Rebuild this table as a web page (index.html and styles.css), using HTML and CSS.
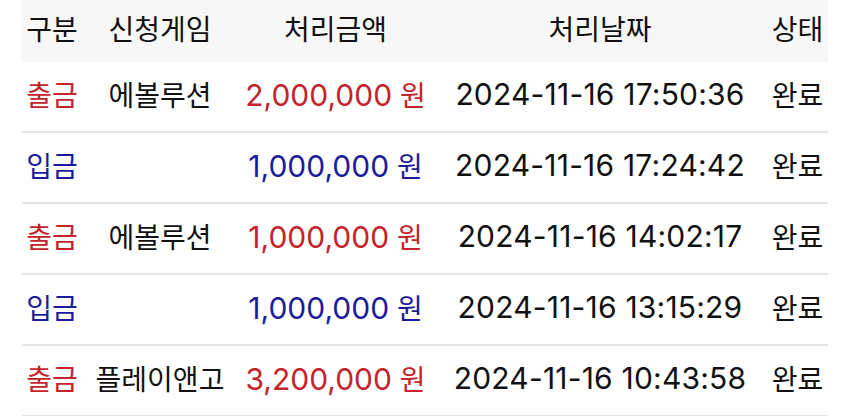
FILE: index.html
```html
<!DOCTYPE html>
<html lang="ko">
<head>
    <meta charset="UTF-8">
    <meta name="viewport" content="width=device-width, initial-scale=1.0">
    <title>처리내역</title>
    <link rel="stylesheet" href="styles.css">
</head>
<body>
    <table class="history">
        <colgroup>
            <col class="c-type">
            <col class="c-game">
            <col class="c-amount">
            <col class="c-date">
            <col class="c-state">
        </colgroup>
        <thead>
            <tr>
                <th>구분</th>
                <th>신청게임</th>
                <th>처리금액</th>
                <th>처리날짜</th>
                <th>상태</th>
            </tr>
        </thead>
        <tbody>
            <tr class="out">
                <td class="kind">출금</td>
                <td>에볼루션</td>
                <td class="amount"><span class="num">2,000,000</span> 원</td>
                <td class="date">2024-11-16 17:50:36</td>
                <td>완료</td>
            </tr>
            <tr class="in">
                <td class="kind">입금</td>
                <td></td>
                <td class="amount"><span class="num">1,000,000</span> 원</td>
                <td class="date">2024-11-16 17:24:42</td>
                <td>완료</td>
            </tr>
            <tr class="out">
                <td class="kind">출금</td>
                <td>에볼루션</td>
                <td class="amount"><span class="num">1,000,000</span> 원</td>
                <td class="date">2024-11-16 14:02:17</td>
                <td>완료</td>
            </tr>
            <tr class="in">
                <td class="kind">입금</td>
                <td></td>
                <td class="amount"><span class="num">1,000,000</span> 원</td>
                <td class="date">2024-11-16 13:15:29</td>
                <td>완료</td>
            </tr>
            <tr class="out">
                <td class="kind">출금</td>
                <td>플레이앤고</td>
                <td class="amount"><span class="num">3,200,000</span> 원</td>
                <td class="date">2024-11-16 10:43:58</td>
                <td>완료</td>
            </tr>
        </tbody>
    </table>
</body>
</html>
```

FILE: styles.css
```css
body {
    margin: 0;
    padding: 0 22px;
    background: #ffffff;
    font-family: Inter, "Noto Sans CJK KR", sans-serif;
    color: #111;
}
.history {
    width: 806px;
    border-collapse: collapse;
    table-layout: fixed;
    font-size: 28px;
}
.c-type { width: 60px; }
.c-game { width: 156px; }
.c-amount { width: 195px; }
.c-date { width: 334px; }
.c-state { width: 61px; }
th {
    height: 56px;
    padding: 0 0 6px;
    background: #f7f7f7;
    font-weight: 400;
    text-align: center;
    white-space: nowrap;
}
td {
    height: 63px;
    padding: 0 0 6px;
    text-align: center;
    white-space: nowrap;
    border-bottom: 2px solid #e4e4e4;
}
.num {
    font-size: 30px;
}
.date {
    font-size: 30px;
    letter-spacing: 0.2px;
}
.out .kind,
.out .amount {
    color: #c4232b;
}
.in .kind,
.in .amount {
    color: #1c1c9a;
}
```
